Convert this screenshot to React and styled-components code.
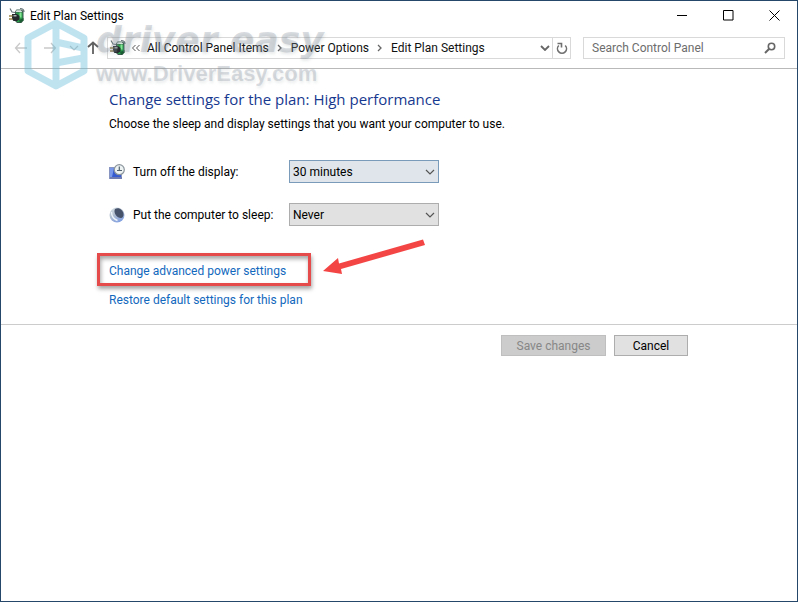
import React from "react";
import styled, { createGlobalStyle } from "styled-components";

const GlobalStyle = createGlobalStyle`
  *, *::before, *::after { box-sizing: border-box; }
  body { margin: 0; background: #fff; }
  body, button, input, select {
    font-family: Roboto, "Open Sans", sans-serif;
    font-size: 12px;
    line-height: 16px;
    color: #000;
  }
`;

const Window = styled.div`
  position: relative;
  min-height: 100vh;
  border: 1px solid #24476a;
  background: #fff;
`;

const TitleBar = styled.header`
  display: flex;
  align-items: center;
  height: 29px;
  padding-left: 8px;
`;

const Title = styled.span`
  flex: 1;
  margin-left: 5px;
  white-space: nowrap;
`;

const CaptionButton = styled.button`
  display: grid;
  place-items: center;
  width: 46px;
  height: 28px;
  padding: 0;
  border: 0;
  background: none;
`;

const NavBar = styled.nav`
  display: flex;
  align-items: center;
  height: 39px;
  padding: 0 12px 2px 10px;
  border-bottom: 1px solid #b9b9b9;
`;

const NavButton = styled.button`
  display: grid;
  place-items: center;
  flex: none;
  width: ${(p) => p.$width}px;
  height: 22px;
  padding: 0;
  border: 0;
  background: none;
`;

const AddressBar = styled.div`
  display: flex;
  flex: 1;
  align-items: center;
  min-width: 0;
  height: 22px;
  padding-left: 2px;
  border: 1px solid #d9d9d9;
`;

const Crumbs = styled.div`
  display: flex;
  flex: 1;
  align-items: center;
  gap: 7px;
  min-width: 0;
  margin-left: 6px;
  white-space: nowrap;
`;

const Crumb = styled.a`
  color: #111;
  text-decoration: none;
`;

const RefreshButton = styled(NavButton)`
  height: 20px;
  border-left: 1px solid #d9d9d9;
`;

const Search = styled.label`
  display: flex;
  align-items: center;
  flex: none;
  width: 202px;
  height: 22px;
  margin-left: 12px;
  padding: 0 8px;
  border: 1px solid #d9d9d9;
`;

const SearchInput = styled.input`
  flex: 1;
  min-width: 0;
  padding: 0;
  border: 0;
  outline: 0;
  background: none;
  &::placeholder { color: #6d6d6d; opacity: 1; }
`;

const Content = styled.main`
  padding: 19px 16px 16px 108px;
  border-bottom: 1px solid #ccc;
`;

const Heading = styled.h1`
  margin: 0;
  color: #17398f;
  font-family: "Open Sans", "Noto Sans", sans-serif;
  font-size: 15px;
  font-weight: 400;
  line-height: 22px;
`;

const Description = styled.p`
  margin: 6px 0 0;
`;

const Settings = styled.div`
  display: grid;
  gap: 20px;
  margin-top: 28px;
`;

const SettingRow = styled.div`
  display: grid;
  grid-template-columns: 16px 148px 150px;
  align-items: center;
  column-gap: 8px;
  white-space: nowrap;
`;

const SelectBox = styled.div`
  display: grid;
  align-items: center;
  > * { grid-area: 1 / 1; }
  > svg { justify-self: end; margin-right: 4px; pointer-events: none; }
`;

const Select = styled.select`
  appearance: none;
  width: 100%;
  height: 23px;
  padding: 0 20px 0 3px;
  border: 1px solid ${(p) => (p.$active ? "#7a9cba" : "#adadad")};
  border-radius: 0;
  outline: 0;
  background: ${(p) => (p.$active ? "#dfe5ea" : "#e1e1e1")};
`;

const Links = styled.div`
  display: flex;
  flex-direction: column;
  align-items: flex-start;
  gap: 13px;
  margin-top: 37px;
`;

const Link = styled.a`
  position: relative;
  color: #1268bd;
  text-decoration: none;
  white-space: nowrap;
`;

const Highlight = styled.span`
  position: absolute;
  top: -10px;
  left: -12px;
  width: 214px;
  height: 33px;
  border: 3px solid #e64b4b;
  box-shadow: 1px 3px 4px rgba(0, 0, 0, 0.35), inset 1px 3px 4px rgba(0, 0, 0, 0.35);
  pointer-events: none;
`;

const Pointer = styled.svg`
  position: absolute;
  top: -25px;
  left: 212px;
  pointer-events: none;
`;

const Footer = styled.footer`
  display: flex;
  justify-content: flex-end;
  gap: 8px;
  padding: 10px 109px;
`;

const Button = styled.button`
  width: ${(p) => p.$width}px;
  height: 21px;
  padding: 0;
  border: 1px solid #adadad;
  background: #e1e1e1;
  &:disabled {
    border-color: #bfbfbf;
    background: #ccc;
    color: #878787;
  }
`;

const Watermark = styled.div`
  position: absolute;
  top: 17px;
  left: 21px;
  display: flex;
  gap: 6px;
  pointer-events: none;
`;

const Brand = styled.div`
  color: rgba(126, 138, 150, 0.28);
  font-family: "Liberation Sans", Arial, sans-serif;
  font-weight: 700;
  white-space: nowrap;
  text-shadow: 1px 2px 3px rgba(100, 110, 120, 0.14);
`;

const BrandName = styled.div`
  font-family: "DejaVu Sans", sans-serif;
  font-size: 36px;
  font-style: italic;
  line-height: 44px;
`;

const BrandSite = styled.div`
  font-size: 22px;
  line-height: 24px;
`;

const PlanIcon = () => (
  <svg width="16" height="18" viewBox="0 0 16 18" aria-hidden="true">
    <path d="M6 4.500 7.500 2.500h5L14.500 4v9.500L12.500 16H8L6 14z" fill="#3f5a50" />
    <path d="M7 5.500h6.500v7.500l-1.800 2H8.300L7 13.500z" fill="#2c9f4c" />
    <path d="M7.500 3.200h4.500l1.300 1.800H6.800z" fill="#dbe8e0" />
    <path d="M10.500 5.500h2v5h-2z" fill="#86e496" />
    <path d="m1 1.500 2 3.500 3 .5M11 1.500c3 0 4 1 4 3.500" fill="none" stroke="#66757a" strokeWidth="1.2" />
    <path d="M3 7h5l2.500 2v3.500L8 14H4.500L3 12z" fill="#23292b" />
    <path d="M4.500 8h3v1.500h-3z" fill="#a9b1b1" />
    <path d="M0 9h3.500M0 12h3.500" stroke="#9c8648" strokeWidth="1.4" />
    <path d="m10 13 4.500-2v2.500L11 16z" fill="#1b5e33" />
  </svg>
);

const Chevron = ({ color = "#666", width = 1.2 }) => (
  <svg width="10" height="6" viewBox="0 0 10 6" fill="none" stroke={color} strokeWidth={width} aria-hidden="true">
    <path d="m1 1 4 4 4-4" />
  </svg>
);

const CrumbArrow = () => (
  <svg width="8" height="8" viewBox="0 0 8 8" fill="none" stroke="#666" strokeWidth="1.3" aria-hidden="true">
    <path d="m2 1 3 3-3 3" />
  </svg>
);

const Arrow = ({ turn = 0, color = "#c9c9c9", width = 1.3 }) => (
  <svg width="14" height="14" viewBox="0 0 14 14" fill="none" stroke={color} strokeWidth={width} aria-hidden="true">
    <path d="M13 7H2M6 2 1.500 7 6 12" transform={`rotate(${turn} 7 7)`} />
  </svg>
);

const DisplayIcon = () => (
  <svg width="16" height="16" viewBox="0 0 16 16" aria-hidden="true">
    <path d="M0 3h13v12H0z" fill="#8795c0" />
    <path d="M1 4h11v9H1z" fill="#365bd0" />
    <path d="M1 4h4l-2 9H1z" fill="#7899eb" />
    <path d="M1 14h12" stroke="#6675ad" strokeWidth="1.5" />
    <circle cx="10.300" cy="5.700" r="5" fill="#edf2f3" stroke="#8b959c" strokeWidth="1.2" />
    <path d="M10.300 2.500V6.500M8 6.500h5" fill="none" stroke="#536470" strokeWidth="1.2" />
  </svg>
);

const SleepIcon = () => (
  <svg width="16" height="16" viewBox="0 0 16 16" aria-hidden="true">
    <defs>
      <linearGradient id="moon" x1="0" y1="0" x2="0.5" y2="1">
        <stop offset="0" stopColor="#dce5ec" />
        <stop offset="0.5" stopColor="#b4c0cf" />
        <stop offset="1" stopColor="#86a3e0" />
      </linearGradient>
    </defs>
    <circle cx="8" cy="8" r="7.500" fill="url(#moon)" />
    <path d="M6 2c4-2 8 1 8.500 5 .3 2-1 4-2.500 4C8 11 4 6 6 2z" fill="#47536b" />
    <path d="M2.500 5c0 4 2 7 6 8.500" fill="none" stroke="#eef4fa" strokeWidth="1.4" />
  </svg>
);

const LogoMark = () => (
  <svg width="68" height="74" viewBox="0 0 68 74" fill="none" stroke="#68bddc" strokeOpacity="0.42" strokeWidth="7" strokeLinejoin="round" aria-hidden="true">
    <path d="M34 5 62 20V53L34 68 6 53V20zM34 5V68M34 24 61 30M34 45 61 40" />
  </svg>
);

function Setting({ id, icon, label, options, active }) {
  return (
    <SettingRow>
      {icon}
      <label htmlFor={id}>{label}</label>
      <SelectBox>
        <Select id={id} $active={active}>
          {options.map((option) => (
            <option key={option}>{option}</option>
          ))}
        </Select>
        <Chevron color="#555" />
      </SelectBox>
    </SettingRow>
  );
}

export default function App() {
  return (
    <>
      <GlobalStyle />
      <Window>
        <TitleBar>
          <PlanIcon />
          <Title>Edit Plan Settings</Title>
          <CaptionButton aria-label="Minimize">
            <svg width="11" height="11" stroke="#000" fill="none"><path d="M0 5.500h10" /></svg>
          </CaptionButton>
          <CaptionButton aria-label="Maximize">
            <svg width="11" height="11" stroke="#000" fill="none"><path d="M.5.500h9.500v9.500H.5z" /></svg>
          </CaptionButton>
          <CaptionButton aria-label="Close">
            <svg width="11" height="11" stroke="#000" fill="none"><path d="m.5.500 10 10M10.500.500l-10 10" /></svg>
          </CaptionButton>
        </TitleBar>

        <NavBar aria-label="Location">
          <NavButton $width={20} aria-label="Back"><Arrow /></NavButton>
          <NavButton $width={38} aria-label="Forward"><Arrow turn={180} /></NavButton>
          <NavButton $width={10} aria-label="Recent locations"><Chevron color="#c4c4c4" /></NavButton>
          <NavButton $width={28} aria-label="Up"><Arrow turn={90} color="#606060" width={1.8} /></NavButton>
          <AddressBar>
            <PlanIcon />
            <Crumbs>
              <svg width="8" height="8" viewBox="0 0 8 8" fill="none" stroke="#555" aria-hidden="true">
                <path d="M3.500 1 .5 4l3 3M7.500 1l-3 3 3 3" />
              </svg>
              <Crumb href="#items">All Control Panel Items</Crumb>
              <CrumbArrow />
              <Crumb href="#power">Power Options</Crumb>
              <CrumbArrow />
              <Crumb href="#plan">Edit Plan Settings</Crumb>
            </Crumbs>
            <NavButton $width={14} aria-label="Previous locations"><Chevron width={1.8} /></NavButton>
            <RefreshButton $width={18} aria-label="Refresh">
              <svg width="12" height="12" viewBox="0 0 12 12" fill="none" stroke="#707070" strokeWidth="1.6" aria-hidden="true">
                <path d="M9.200 3.500A4.500 4.500 0 1 1 2.800 3.500M1.500 1.500h4v4" />
              </svg>
            </RefreshButton>
          </AddressBar>
          <Search>
            <SearchInput type="text" aria-label="Search Control Panel" placeholder="Search Control Panel" />
            <svg width="12" height="12" viewBox="0 0 12 12" fill="none" stroke="#666" aria-hidden="true">
              <circle cx="7.500" cy="4.500" r="3.200" strokeWidth="1.6" />
              <path d="M5 7 1 11" strokeWidth="2" />
            </svg>
          </Search>
        </NavBar>

        <Content>
          <Heading>Change settings for the plan: High performance</Heading>
          <Description>Choose the sleep and display settings that you want your computer to use.</Description>
          <Settings>
            <Setting id="display" icon={<DisplayIcon />} label="Turn off the display:" options={["30 minutes", "Never"]} active />
            <Setting id="sleep" icon={<SleepIcon />} label="Put the computer to sleep:" options={["Never", "30 minutes"]} />
          </Settings>
          <Links>
            <Link href="#advanced">
              Change advanced power settings
              <Highlight />
              <Pointer width="106" height="40" viewBox="0 0 106 40" fill="#f44545" aria-hidden="true">
                <path d="M2 33 17 20 18 25.500 102 1.500 104 7 20 31 21 36z" />
              </Pointer>
            </Link>
            <Link href="#restore">Restore default settings for this plan</Link>
          </Links>
        </Content>

        <Footer>
          <Button $width={105} disabled>Save changes</Button>
          <Button $width={74}>Cancel</Button>
        </Footer>

        <Watermark>
          <LogoMark />
          <Brand>
            <BrandName>driver easy</BrandName>
            <BrandSite>www.DriverEasy.com</BrandSite>
          </Brand>
        </Watermark>
      </Window>
    </>
  );
}
